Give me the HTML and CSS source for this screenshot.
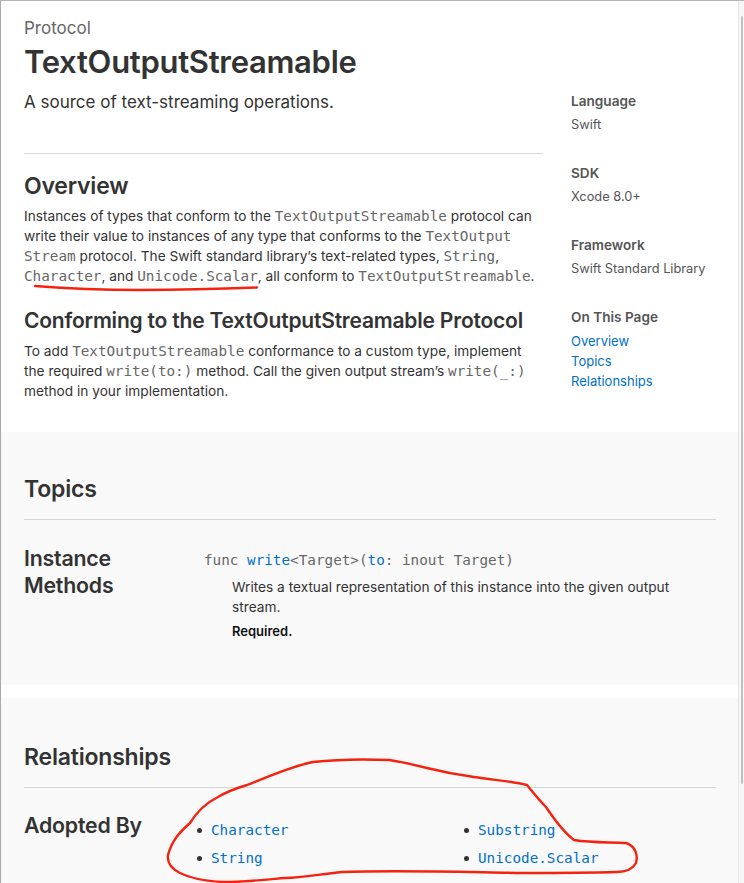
FILE: index.html
```html
<!DOCTYPE html>
<html>
<head>
<meta charset="utf-8">
<link rel="stylesheet" href="styles.css">
</head>
<body>
<div class="window">
  <div class="page">
    <div class="top">
      <header class="header">
        <div class="eyebrow">Protocol</div>
        <h1 class="title">TextOutputStreamable</h1>
      </header>
      <div class="row">
        <div class="main">
          <p class="abstract">A source of text-streaming operations.</p>
          <hr class="rule">
          <h2 class="h2 overview">Overview</h2>
          <p class="para">Instances of types that conform to the <code>TextOutputStreamable</code> protocol can write their value to instances of any type that conforms to the <code>TextOutput Stream</code> protocol. The Swift standard library’s text-related types, <code>String</code>, <code>Character</code>, and <code>Unicode.Scalar</code>, all conform to <code>TextOutputStreamable</code>.</p>
          <h3 class="h3sub">Conforming to the TextOutputStreamable Protocol</h3>
          <p class="para">To add <code>TextOutputStreamable</code> conformance to a custom type, implement the required <code>write(to:)</code> method. Call the given output stream’s <code>write(_:)</code> method in your implementation.</p>
        </div>
        <aside class="aside">
          <div class="label">Language</div>
          <div class="value">Swift</div>
          <div class="label">SDK</div>
          <div class="value">Xcode 8.0+</div>
          <div class="label">Framework</div>
          <div class="value">Swift Standard Library</div>
          <div class="label">On This Page</div>
          <nav class="toc">
            <a href="#">Overview</a>
            <a href="#">Topics</a>
            <a href="#">Relationships</a>
          </nav>
        </aside>
      </div>
    </div>

    <section class="band topics">
      <h2 class="h2">Topics</h2>
      <hr class="rule">
      <div class="group">
        <h3 class="h3">Instance<br>Methods</h3>
        <div class="group-body">
          <div class="decl"><span class="kw">func</span> <a class="sym" href="#">write</a>&lt;Target&gt;(<a class="sym" href="#">to</a>: inout Target)</div>
          <p class="desc">Writes a textual representation of this instance into the given output stream.</p>
          <p class="req">Required.</p>
        </div>
      </div>
    </section>

    <section class="band rels">
      <h2 class="h2">Relationships</h2>
      <hr class="rule">
      <div class="group adopted">
        <h3 class="h3">Adopted By</h3>
        <ul class="list">
          <li><span class="dot"></span><a href="#">Character</a></li>
          <li><span class="dot"></span><a href="#">Substring</a></li>
          <li><span class="dot"></span><a href="#">String</a></li>
          <li><span class="dot"></span><a href="#">Unicode.Scalar</a></li>
        </ul>
      </div>
    </section>
  </div>
  <div class="scrollbar"><div class="thumb"></div></div>

  <svg class="ink" width="744" height="883" viewBox="0 0 744 883">
    <path d="M35 286 C 60 288, 100 290, 140 290 C 180 290, 220 289, 257 287.5" />
    <path d="M168 855 C 172 840, 180 832, 190 823 C 198 810, 206 803, 218 797 C 228 791, 237 788, 247 785 C 270 776, 292 766, 313 762 C 340 759, 365 759, 389 760 C 402 762, 415 765, 427 768 C 443 772, 459 775, 474 777 C 492 780, 512 781, 527 785 C 535 795, 540 801, 546 807 C 556 822, 566 834, 574 840 C 592 843, 610 842, 626 843 C 636 846, 638 856, 636 863 C 632 870, 626 872, 617 872 C 585 873, 552 873, 522 873 C 460 872, 400 870, 342 872 C 320 874, 303 878, 285 878 C 262 880, 243 882, 223 882 C 205 881, 190 878, 180 873 C 170 868, 167 862, 168 855" />
  </svg>
</div>
</body>
</html>
```

FILE: styles.css
```css
* { box-sizing: border-box; }
html, body { margin: 0; padding: 0; background: #fff; }
body {
  font-family: Inter, "Noto Sans", sans-serif;
  color: #333;
  -webkit-font-smoothing: antialiased;
}
.window {
  position: relative;
  display: flex;
  width: 744px;
  height: 883px;
  overflow: hidden;
  border-top: 1px solid #b4b4b4;
}
.page {
  flex: 1;
  border-left: 1px solid #a9a9a9;
  display: flex;
  flex-direction: column;
}
.scrollbar {
  width: 6px;
  background: #f7f7f7;
  border-left: 1px solid #e6e6e6;
  padding: 15px 1px 0 2px;
}
.thumb {
  height: 768px;
  background: #c1c1c1;
  border-radius: 2px;
}
code {
  font-family: "DejaVu Sans Mono", "Liberation Mono", monospace;
  font-size: 14.3px;
  line-height: 1;
  color: #666;
}
.top { padding: 0 22px 31px 23px; }
.eyebrow {
  margin-top: 17px;
  font-size: 17px;
  line-height: 20px;
  color: #666;
  font-weight: 400;
}
.title {
  margin: 5px 0 0;
  font-size: 31px;
  line-height: 38px;
  font-weight: 600;
  color: #333;
  letter-spacing: -0.3px;
}
.row { display: flex; margin-top: 9px; }
.main { width: 519px; }
.abstract {
  margin: 0;
  font-size: 17px;
  line-height: 24px;
  color: #333;
}
.rule {
  border: 0;
  border-top: 1px solid #d6d6d6;
  margin: 39px 0 0;
}
.h2 {
  margin: 0;
  font-size: 23px;
  line-height: 28px;
  font-weight: 600;
  color: #333;
  letter-spacing: -0.2px;
}
.overview { margin-top: 18px; }
.h3sub {
  margin: 21px 0 0;
  font-size: 21px;
  line-height: 28px;
  font-weight: 600;
  color: #333;
  letter-spacing: -0.2px;
}
.para {
  margin: 6px 0 0;
  font-size: 13.7px;
  line-height: 20px;
  color: #333;
}
.aside {
  width: 145px;
  margin-left: 28px;
  padding-top: 1px;
}
.label {
  font-size: 13.6px;
  line-height: 20px;
  font-weight: 600;
  color: #555;
  margin-top: 28px;
}
.label:first-child { margin-top: 0; }
.value {
  font-size: 12.8px;
  line-height: 20px;
  color: #555;
  margin-top: 4px;
}
.toc { display: flex; flex-direction: column; margin-top: 4px; }
.toc a {
  font-size: 13px;
  line-height: 20px;
  color: #0070c9;
  text-decoration: none;
}
.band {
  background: #f9f9f9;
  padding: 0 22px 0 23px;
}
.topics { padding-top: 43px; padding-bottom: 44px; }
.band .rule { margin-top: 16px; }
.group { display: flex; margin-top: 25px; }
.h3 {
  width: 180px;
  margin: 0;
  font-size: 21.3px;
  line-height: 27px;
  font-weight: 600;
  color: #333;
  letter-spacing: -0.2px;
}
.group-body { padding-top: 5px; }
.decl {
  font-family: "DejaVu Sans Mono", "Liberation Mono", monospace;
  font-size: 14.3px;
  line-height: 20px;
  color: #666;
}
.decl .sym { color: #0070c9; text-decoration: none; }
.desc {
  margin: 7px 0 0 28px;
  font-size: 13.7px;
  line-height: 20px;
  color: #333;
  width: 480px;
}
.req {
  margin: 4px 0 0 28px;
  font-size: 13px;
  line-height: 20px;
  font-weight: 600;
  color: #111;
}
.rels {
  margin-top: 13px;
  padding-top: 45px;
  flex: 1;
}
.adopted { margin-top: 24px; }
.adopted .h3 { width: 173px; }
.list {
  list-style: none;
  margin: 0;
  padding: 4px 0 0;
  display: grid;
  grid-template-columns: 267px 1fr;
  grid-auto-rows: 28px;
}
.list li { display: flex; align-items: center; gap: 9px; }
.dot {
  width: 5px; height: 5px; border-radius: 50%;
  background: #333;
}
.list a {
  font-family: "DejaVu Sans Mono", "Liberation Mono", monospace;
  font-size: 14.3px;
  color: #0070c9;
  text-decoration: none;
}
.ink {
  position: absolute;
  left: 0; top: -1px;
  pointer-events: none;
  fill: none;
  stroke: #f5220f;
  stroke-width: 2.4;
  stroke-linecap: round;
  stroke-linejoin: round;
}
```
